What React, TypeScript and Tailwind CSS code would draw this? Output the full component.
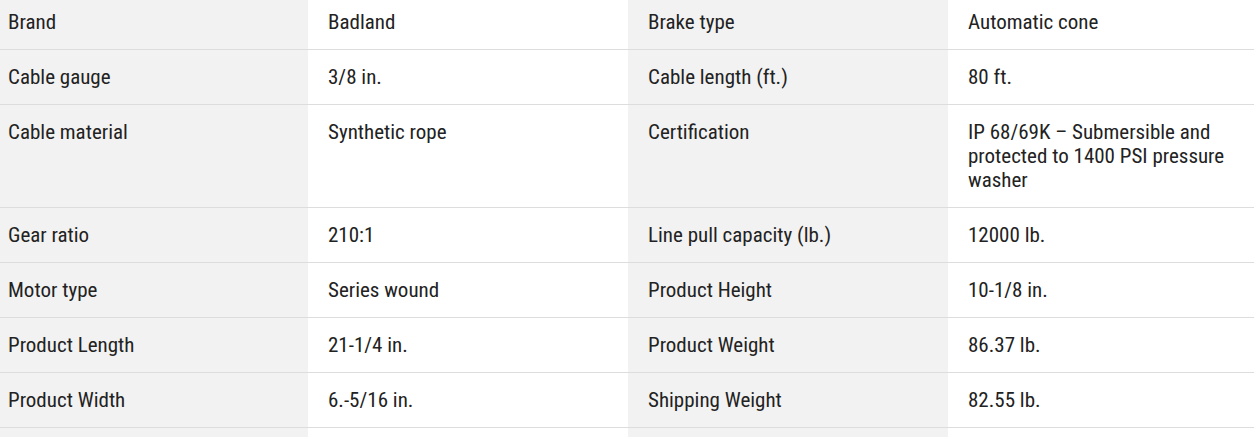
const rows: [string, string, string, string][] = [
  ['Brand', 'Badland', 'Brake type', 'Automatic cone'],
  ['Cable gauge', '3/8 in.', 'Cable length (ft.)', '80 ft.'],
  ['Cable material', 'Synthetic rope', 'Certification', 'IP 68/69K – Submersible and protected to 1400 PSI pressure washer'],
  ['Gear ratio', '210:1', 'Line pull capacity (lb.)', '12000 lb.'],
  ['Motor type', 'Series wound', 'Product Height', '10-1/8 in.'],
  ['Product Length', '21-1/4 in.', 'Product Weight', '86.37 lb.'],
  ['Product Width', '6.-5/16 in.', 'Shipping Weight', '82.55 lb.'],
  ['', '', '', ''],
]

export default function App() {
  return (
    <div className="h-[437px] w-[1254px] overflow-hidden bg-white">
      <table className="-mt-[5px] w-[1254px] table-fixed border-collapse font-['Roboto_Condensed','Roboto',sans-serif] text-[21px] leading-[24px] text-[#222]">
        <colgroup>
          <col className="w-[308px]" />
          <col className="w-[320px]" />
          <col className="w-[320px]" />
          <col />
        </colgroup>
        <tbody>
          {rows.map((r, i) => (
            <tr key={i} className="border-b border-[#dddddd]">
              <td className="bg-[#f2f2f2] py-[15px] pl-2 pr-4 align-top">{r[0]}</td>
              <td className="bg-white px-5 py-[15px] align-top">{r[1]}</td>
              <td className="bg-[#f2f2f2] px-5 py-[15px] align-top">{r[2]}</td>
              <td className="bg-white py-[15px] pl-5 pr-4 align-top">{r[3]}</td>
            </tr>
          ))}
        </tbody>
      </table>
    </div>
  )
}
